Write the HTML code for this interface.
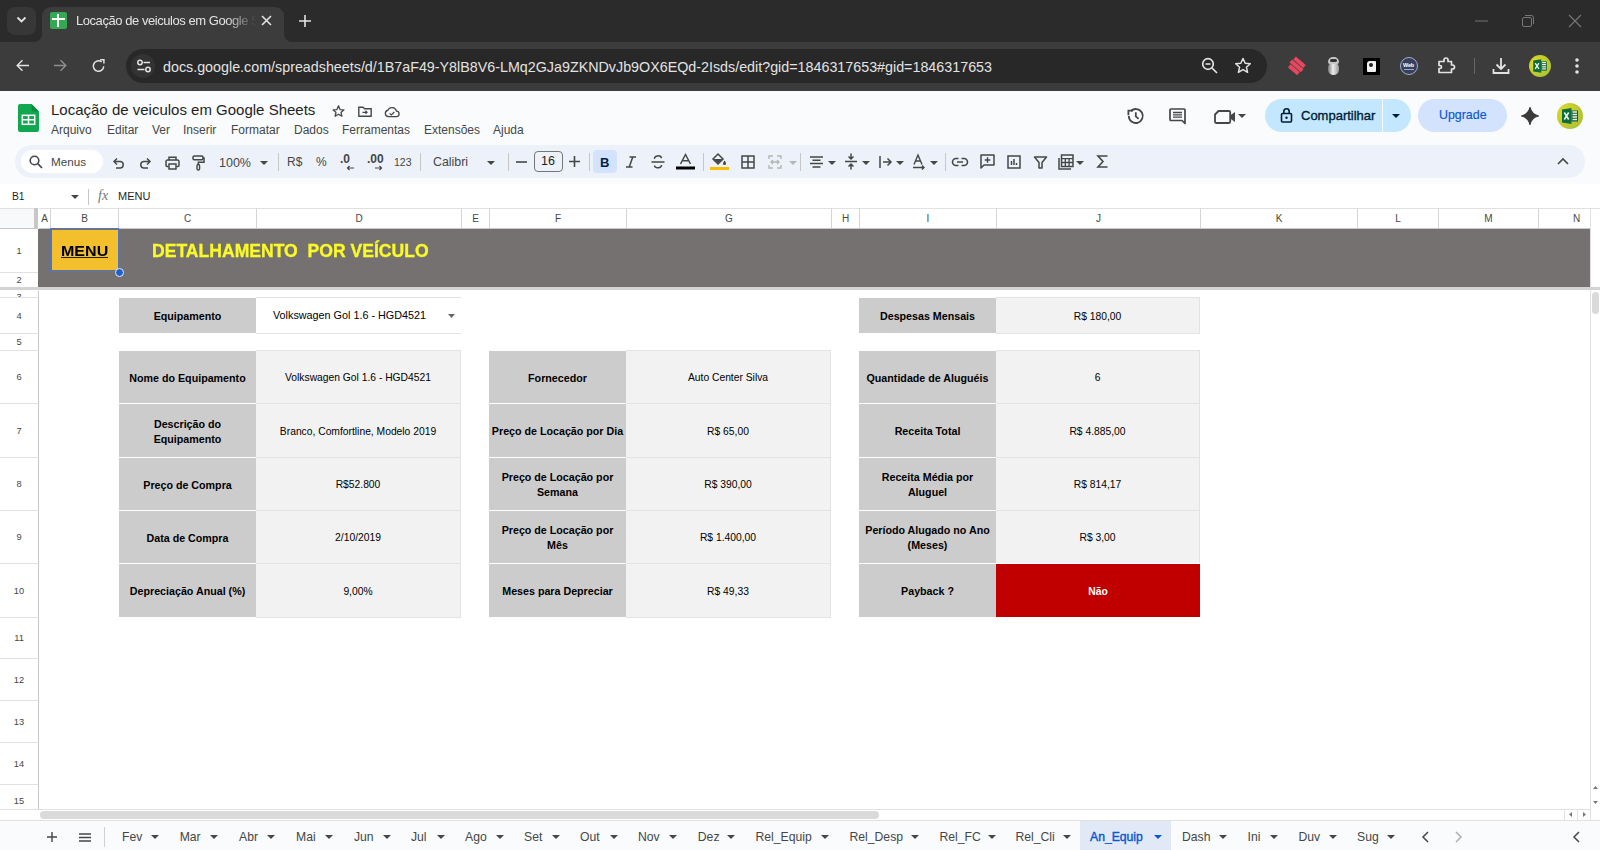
<!DOCTYPE html>
<html><head><meta charset="utf-8">
<style>
*{box-sizing:border-box;margin:0;padding:0}
html,body{width:1600px;height:850px;overflow:hidden;background:#fff;font-family:"Liberation Sans",sans-serif}
.a{position:absolute}
svg{position:absolute;overflow:visible}
/* chrome */
#tabstrip{left:0;top:0;width:1600px;height:42px;background:#2b2b2b}
#toolbar{left:0;top:42px;width:1600px;height:49px;background:#3c3c3c}
#omni{left:126px;top:49px;width:1141px;height:34px;border-radius:17px;background:#282828}
.ct{color:#e3e3e3;font-size:15px;white-space:nowrap}
/* sheets header */
#sh{left:0;top:91px;width:1600px;height:117px;background:#f9fbfd}
.menu{top:122.5px;font-size:12px;color:#444746;white-space:nowrap}
#tb{left:15px;top:145px;width:1570px;height:33px;border-radius:17px;background:#edf2fa}
.ti{color:#444746;font-size:12px;white-space:nowrap}
/* grid */
.colh{top:208px;height:21px;background:#fff;border-right:1px solid #d5d5d5;border-top:1px solid #e1e1e1;border-bottom:1px solid #c7c7c7;font-size:10px;color:#444746;text-align:center;line-height:20px}
.rowh{left:0;width:39px;background:#fff;border-bottom:1px solid #e1e1e1;border-right:1px solid #c7c7c7;font-size:9.3px;color:#444746;display:flex;align-items:center;justify-content:center}
.c{display:flex;align-items:center;justify-content:center;text-align:center;color:#000;font-size:10.3px;line-height:14.8px}
.lab{background:#cccccc;font-weight:bold;font-size:10.7px;padding-top:2px}
.val{background:#f2f2f2;padding-top:3px}
</style></head><body>

<!-- ============ CHROME TAB STRIP ============ -->
<div id="tabstrip" class="a"></div>
<div class="a" style="left:7px;top:7px;width:29px;height:28px;border-radius:8px;background:#373737"></div>
<svg style="left:16px;top:16px" width="11" height="8" viewBox="0 0 11 8"><path d="M1.5 1.5 L5.5 5.5 L9.5 1.5" stroke="#e3e3e3" stroke-width="1.8" fill="none"/></svg>
<div class="a" style="left:42px;top:7px;width:242px;height:36px;background:#3c3c3c;border-radius:9px 9px 0 0"></div>
<div class="a" style="left:34px;top:34px;width:8px;height:8px;background:#3c3c3c"></div><div class="a" style="left:26px;top:26px;width:16px;height:16px;border-radius:50%;background:#2b2b2b;clip-path:inset(8px 0 0 8px)"></div>
<div class="a" style="left:284px;top:34px;width:8px;height:8px;background:#3c3c3c"></div><div class="a" style="left:284px;top:26px;width:16px;height:16px;border-radius:50%;background:#2b2b2b;clip-path:inset(8px 8px 0 0)"></div>
<div class="a" style="left:50px;top:12px;width:17px;height:17px;background:#34a853;border-radius:2px"></div>
<div class="a" style="left:57px;top:14px;width:2px;height:13px;background:#fff"></div>
<div class="a" style="left:52px;top:18px;width:13px;height:2px;background:#fff"></div>
<div class="a ct" style="left:76px;top:12.5px;font-size:13px;letter-spacing:-0.45px;width:180px;overflow:hidden;-webkit-mask-image:linear-gradient(90deg,#000 150px,transparent 180px)">Locação de veiculos em Google Sheets</div>
<svg style="left:261px;top:15px" width="11" height="11" viewBox="0 0 11 11"><path d="M1 1L10 10M10 1L1 10" stroke="#e3e3e3" stroke-width="1.6"/></svg>
<svg style="left:298px;top:14px" width="14" height="14" viewBox="0 0 14 14"><path d="M7 1V13M1 7H13" stroke="#e3e3e3" stroke-width="1.6"/></svg>
<svg style="left:1475px;top:20px" width="14" height="2"><path d="M0 1H13" stroke="#777" stroke-width="1"/></svg>
<svg style="left:1521px;top:14px" width="14" height="14"><rect x="1.5" y="3.5" width="9" height="9" rx="1.5" stroke="#777" fill="none"/><path d="M4 1.5H10.5A2 2 0 0 1 12.5 3.5V10" stroke="#777" fill="none"/></svg>
<svg style="left:1568px;top:14px" width="14" height="14"><path d="M1 1L13 13M13 1L1 13" stroke="#777" stroke-width="1.1"/></svg>

<!-- ============ CHROME TOOLBAR ============ -->
<div id="toolbar" class="a"></div>
<svg style="left:16px;top:59px" width="14" height="14" viewBox="0 0 14 14"><path d="M13 6.5H1.5M6.5 1.2L1.2 6.5L6.5 11.8" stroke="#e3e3e3" stroke-width="1.4" fill="none"/></svg>
<svg style="left:53px;top:59px" width="14" height="14" viewBox="0 0 14 14"><path d="M1 6.5H12.5M7.5 1.2L12.8 6.5L7.5 11.8" stroke="#8e8e8e" stroke-width="1.4" fill="none"/></svg>
<svg style="left:91px;top:58px" width="15" height="15" viewBox="0 0 15 15"><path d="M12.7 8.2A5.2 5.2 0 1 1 10.6 3.9" stroke="#e3e3e3" stroke-width="1.5" fill="none"/><path d="M9.2 1.8H12.9V5.5" stroke="#e3e3e3" stroke-width="1.5" fill="none"/></svg>
<div id="omni" class="a"></div>
<div class="a" style="left:131px;top:54px;width:24px;height:24px;border-radius:50%;background:#333"></div>
<svg style="left:136px;top:59px" width="16" height="14" viewBox="0 0 16 14"><circle cx="4" cy="3.5" r="2.2" stroke="#e3e3e3" stroke-width="1.5" fill="none"/><path d="M7.5 3.5H14" stroke="#e3e3e3" stroke-width="1.5"/><circle cx="12" cy="10.5" r="2.2" stroke="#e3e3e3" stroke-width="1.5" fill="none"/><path d="M1.5 10.5H8.5" stroke="#e3e3e3" stroke-width="1.5"/></svg>
<div class="a ct" style="left:163px;top:58.5px;font-size:14.3px">docs.google.com/spreadsheets/d/1B7aF49-Y8lB8V6-LMq2GJa9ZKNDvJb9OX6EQd-2Isds/edit?gid=1846317653#gid=1846317653</div>
<svg style="left:1201px;top:57px" width="18" height="18" viewBox="0 0 18 18"><circle cx="7" cy="7" r="5.3" stroke="#e3e3e3" stroke-width="1.7" fill="none"/><path d="M11 11L16 16M4.5 7H9.5" stroke="#e3e3e3" stroke-width="1.7"/></svg>
<svg style="left:1234px;top:57px" width="18" height="18" viewBox="0 0 18 18"><path d="M9 1.5L11.2 6.3L16.3 6.8L12.4 10.2L13.6 15.3L9 12.6L4.4 15.3L5.6 10.2L1.7 6.8L6.8 6.3Z" stroke="#e3e3e3" stroke-width="1.5" fill="none" stroke-linejoin="round"/></svg>


<!-- extension icons -->
<svg style="left:1286px;top:55px" width="22" height="22" viewBox="0 0 22 22"><g transform="rotate(40 11 11)" fill="#e4475e"><rect x="4" y="4.5" width="13" height="4"/><rect x="3" y="9.2" width="15" height="4"/><rect x="5" y="13.9" width="12" height="4"/></g></svg>
<div class="a" style="left:1328px;top:63px;width:11px;height:12px;border-radius:5px 5px 6px 6px;background:linear-gradient(90deg,#777,#eee 45%,#999)"></div>
<div class="a" style="left:1328px;top:57px;width:11px;height:7px;border-radius:5px 5px 2px 2px;background:#c8c8c8"></div>
<div class="a" style="left:1330px;top:59px;width:7px;height:3px;border-radius:2px;background:#333"></div>
<div class="a" style="left:1363px;top:58px;width:17px;height:17px;background:#000"></div>
<div class="a" style="left:1367px;top:61px;width:9px;height:11px;background:#f2f2f2;border-radius:3px 1px 1px 1px"></div>
<div class="a" style="left:1369px;top:63px;width:4px;height:4px;background:#222;border-radius:50%"></div>
<div class="a" style="left:1400px;top:57px;width:18px;height:18px;border-radius:50%;background:#33405e;border:1.5px solid #a6adc8"></div>
<div class="a" style="left:1403px;top:62px;font-size:5.5px;color:#fff;font-weight:bold;letter-spacing:-0.2px">Web</div>
<div class="a" style="left:1404px;top:69px;width:10px;height:1px;background:#aab"></div>
<svg style="left:1437px;top:57px" width="18" height="18" viewBox="0 0 18 18"><path d="M2 4.5H7V3A2 2 0 0 1 11 3V4.5H14.5V8H15.5A2 2 0 0 1 15.5 12H14.5V15.5H2V11.5H3A1.5 1.5 0 0 0 3 8.5H2Z" stroke="#e3e3e3" stroke-width="1.7" fill="none" stroke-linejoin="round"/></svg>
<div class="a" style="left:1474px;top:58px;width:1px;height:16px;background:#666"></div>
<svg style="left:1492px;top:57px" width="18" height="18" viewBox="0 0 18 18"><path d="M9 1V12M4.5 7.5L9 12L13.5 7.5M1.5 12V16H16.5V12" stroke="#e3e3e3" stroke-width="1.8" fill="none"/></svg>
<svg style="left:1529px;top:55px" width="22" height="22" viewBox="0 0 26 26"><defs><radialGradient id="g1540" cx="0.3" cy="0.35" r="0.8"><stop offset="0" stop-color="#e2dc28"/><stop offset="1" stop-color="#a9be35"/></radialGradient></defs><circle cx="13" cy="13" r="13" fill="url(#g1540)"/><path d="M5 6.5L14.5 5V21L5 19.5Z" fill="#116b3c"/><path d="M14.5 7.5H21V18.5H14.5Z" fill="#155c34"/><path d="M15.5 9H20M15.5 11.5H20M15.5 14H20M15.5 16.5H20" stroke="#e8f5ec" stroke-width="1.5"/><path d="M7.3 9.5L11.7 16.5M11.7 9.5L7.3 16.5" stroke="#e8f5ec" stroke-width="1.6"/></svg>
<svg style="left:1575px;top:57px" width="4" height="18"><circle cx="2" cy="3" r="1.8" fill="#e3e3e3"/><circle cx="2" cy="9" r="1.8" fill="#e3e3e3"/><circle cx="2" cy="15" r="1.8" fill="#e3e3e3"/></svg>

<!-- ============ SHEETS HEADER ============ -->
<div id="sh" class="a"></div>
<svg style="left:18px;top:104px" width="21" height="28" viewBox="0 0 21 28"><path d="M2 0H13.5L21 7.5V26A2 2 0 0 1 19 28H2A2 2 0 0 1 0 26V2A2 2 0 0 1 2 0Z" fill="#10a84e"/><path d="M13.5 0L21 7.5H15.5A2 2 0 0 1 13.5 5.5Z" fill="#0b8a3e"/><rect x="4.3" y="11.3" width="12.4" height="9" fill="none" stroke="#fff" stroke-width="1.5"/><path d="M4.3 15.8H16.7M10.5 11.3V20.3" stroke="#fff" stroke-width="1.5"/></svg>
<div class="a" style="left:51px;top:101px;font-size:15px;color:#1f1f1f;white-space:nowrap">Locação de veiculos em Google Sheets</div>
<svg style="left:331.5px;top:104.5px" width="13" height="13" viewBox="0 0 15 15"><path d="M7.5 1L9.3 5.3L13.8 5.6L10.4 8.6L11.4 13L7.5 10.7L3.6 13L4.6 8.6L1.2 5.6L5.7 5.3Z" stroke="#444746" stroke-width="1.5" fill="none" stroke-linejoin="round"/></svg>
<svg style="left:358px;top:106px" width="14" height="11" viewBox="0 0 14 11"><path d="M0.8 1.3V10.2H13.2V2.8H6.5L5 1.3Z" stroke="#444746" stroke-width="1.4" fill="none" stroke-linejoin="round"/><path d="M4.5 6.3H9M7.5 4.8L9 6.3L7.5 7.8" stroke="#444746" stroke-width="1.3" fill="none"/></svg>
<svg style="left:383.5px;top:105.5px" width="16" height="12" viewBox="0 0 17 13"><path d="M4.5 11.5A3.5 3.5 0 0 1 4 4.6A5 5 0 0 1 13.3 5.5A3 3 0 0 1 13 11.5Z" stroke="#444746" stroke-width="1.4" fill="none"/><path d="M6 8L7.8 9.7L11 6.5" stroke="#444746" stroke-width="1.3" fill="none"/></svg>
<div class="a menu" style="left:51px">Arquivo</div>
<div class="a menu" style="left:107px">Editar</div>
<div class="a menu" style="left:152px">Ver</div>
<div class="a menu" style="left:183px">Inserir</div>
<div class="a menu" style="left:231px">Formatar</div>
<div class="a menu" style="left:294px">Dados</div>
<div class="a menu" style="left:342px">Ferramentas</div>
<div class="a menu" style="left:424px">Extensões</div>
<div class="a menu" style="left:493px">Ajuda</div>

<!-- right header -->
<svg style="left:1126px;top:106.5px" width="19" height="18" viewBox="0 0 19 18"><path d="M2.8 9A7 7 0 1 0 4.9 4" stroke="#444746" stroke-width="1.8" fill="none"/><path d="M2.4 8.2V3.6H7" stroke="#444746" stroke-width="1.8" fill="none"/><path d="M9.8 5.3V9.3L12.6 11.8" stroke="#444746" stroke-width="1.8" fill="none"/></svg>
<svg style="left:1168.5px;top:108px" width="17" height="17" viewBox="0 0 17 17"><path d="M1 2A1 1 0 0 1 2 1H15A1 1 0 0 1 16 2V15.5L13 12.5H2A1 1 0 0 1 1 11.5Z" stroke="#444746" stroke-width="1.7" fill="none" stroke-linejoin="round"/><path d="M4 4.5H13M4 6.8H13M4 9.1H13" stroke="#444746" stroke-width="1.3"/></svg>
<svg style="left:1214px;top:109.5px" width="23" height="14" viewBox="0 0 23 14"><path d="M4.5 1H15A1.2 1.2 0 0 1 16.2 2.2V11.8A1.2 1.2 0 0 1 15 13H2.2A1.2 1.2 0 0 1 1 11.8V4.5Z" stroke="#444746" stroke-width="1.8" fill="none" stroke-linejoin="round"/><path d="M16.2 5.5L21 2V12L16.2 8.5Z" fill="#444746"/></svg>
<svg style="left:1238px;top:114px" width="8" height="4"><path d="M0 0H8L4 4Z" fill="#444746"/></svg>
<div class="a" style="left:1265px;top:99px;width:146px;height:33px;border-radius:17px;background:#c2e7ff"></div>
<div class="a" style="left:1382px;top:99px;width:1px;height:33px;background:#f9fbfd"></div>
<svg style="left:1280px;top:107px" width="13" height="16" viewBox="0 0 13 16"><rect x="1.5" y="6.5" width="10" height="8.5" rx="1" stroke="#001d35" stroke-width="1.6" fill="none"/><path d="M3.8 6.5V4.5A2.7 2.7 0 0 1 9.2 4.5V6.5" stroke="#001d35" stroke-width="1.6" fill="none"/><circle cx="6.5" cy="10.8" r="1.2" fill="#001d35"/></svg>
<div class="a" style="left:1301px;top:108px;font-size:13px;color:#001d35;-webkit-text-stroke:0.35px #001d35;white-space:nowrap">Compartilhar</div>
<svg style="left:1392px;top:114px" width="8" height="4"><path d="M0 0H8L4 4Z" fill="#001d35"/></svg>
<div class="a" style="left:1418px;top:99px;width:89px;height:33px;border-radius:17px;background:#d3e3fd"></div>
<div class="a" style="left:1439px;top:108px;font-size:12.4px;color:#0b57d0;-webkit-text-stroke:0.15px #0b57d0;white-space:nowrap">Upgrade</div>
<svg style="left:1520px;top:106px" width="20" height="20" viewBox="0 0 20 20"><path d="M10 1.5C11 6 14 9 18.5 10C14 11 11 14 10 18.5C9 14 6 11 1.5 10C6 9 9 6 10 1.5Z" fill="#3a3a3a" stroke="#3a3a3a" stroke-width="1.2" stroke-linejoin="round"/></svg>
<svg style="left:1557px;top:103px" width="26" height="26" viewBox="0 0 26 26"><defs><radialGradient id="g1570" cx="0.3" cy="0.35" r="0.8"><stop offset="0" stop-color="#e2dc28"/><stop offset="1" stop-color="#a9be35"/></radialGradient></defs><circle cx="13" cy="13" r="13" fill="url(#g1570)"/><path d="M5 6.5L14.5 5V21L5 19.5Z" fill="#116b3c"/><path d="M14.5 7.5H21V18.5H14.5Z" fill="#155c34"/><path d="M15.5 9H20M15.5 11.5H20M15.5 14H20M15.5 16.5H20" stroke="#e8f5ec" stroke-width="1.5"/><path d="M7.3 9.5L11.7 16.5M11.7 9.5L7.3 16.5" stroke="#e8f5ec" stroke-width="1.6"/></svg>


<!-- ============ TOOLBAR ============ -->
<div id="tb" class="a"></div>
<div class="a" style="left:21px;top:150px;width:82px;height:23px;border-radius:12px;background:#fff"></div>
<svg style="left:29px;top:155px" width="14" height="14" viewBox="0 0 14 14"><circle cx="5.5" cy="5.5" r="4.3" stroke="#444746" stroke-width="1.6" fill="none"/><path d="M8.7 8.7L13 13" stroke="#444746" stroke-width="1.7"/></svg>
<div class="a ti" style="left:51px;top:155px;font-size:11.7px">Menus</div>
<svg style="left:112px;top:157px" width="13" height="12" viewBox="0 0 13 12"><path d="M3 4.5H8.5A3.3 3.3 0 0 1 8.5 11H4" stroke="#444746" stroke-width="1.5" fill="none"/><path d="M5 1.5L2 4.5L5 7.5" stroke="#444746" stroke-width="1.5" fill="none"/></svg>
<svg style="left:139px;top:157px" width="13" height="12" viewBox="0 0 13 12"><path d="M10 4.5H4.5A3.3 3.3 0 0 0 4.5 11H9" stroke="#444746" stroke-width="1.5" fill="none"/><path d="M8 1.5L11 4.5L8 7.5" stroke="#444746" stroke-width="1.5" fill="none"/></svg>
<svg style="left:165px;top:156px" width="15" height="14" viewBox="0 0 15 14"><path d="M4 4.2V1.2H11V4.2" stroke="#444746" stroke-width="1.5" fill="none"/><path d="M3.5 10.5H2.2A1.2 1.2 0 0 1 1 9.3V5.5A1.5 1.5 0 0 1 2.5 4H12.5A1.5 1.5 0 0 1 14 5.5V9.3A1.2 1.2 0 0 1 12.8 10.5H11.5" stroke="#444746" stroke-width="1.5" fill="none"/><rect x="4" y="8" width="7" height="5" stroke="#444746" stroke-width="1.5" fill="none"/></svg>
<svg style="left:192px;top:155px" width="13" height="16" viewBox="0 0 13 16"><rect x="1" y="1" width="10" height="3.8" rx="1.2" stroke="#444746" stroke-width="1.5" fill="none"/><path d="M11 3H12V7.3H6.3V9.5" stroke="#444746" stroke-width="1.5" fill="none"/><rect x="5" y="9.5" width="2.6" height="5.5" rx="1.3" stroke="#444746" stroke-width="1.4" fill="none"/></svg>
<div class="a ti" style="left:219px;top:156px;font-size:12.5px">100%</div>
<svg style="left:260px;top:161px" width="8" height="4"><path d="M0 0H8L4 4Z" fill="#444746"/></svg>
<div class="a" style="left:278px;top:153px;width:1px;height:18px;background:#c7c7c7"></div>
<div class="a ti" style="left:287px;top:155px;font-size:12px">R$</div>
<div class="a ti" style="left:316px;top:155px;font-size:12px">%</div>
<div class="a ti" style="left:340px;top:152px;font-size:12px;font-weight:bold">.0</div>
<svg style="left:346px;top:165px" width="9" height="6"><path d="M8 3H1.5M3.5 1L1.5 3L3.5 5" stroke="#444746" stroke-width="1.2" fill="none"/></svg>
<div class="a ti" style="left:367px;top:152px;font-size:12px;font-weight:bold">.00</div>
<svg style="left:374px;top:165px" width="9" height="6"><path d="M1 3H7.5M5.5 1L7.5 3L5.5 5" stroke="#444746" stroke-width="1.2" fill="none"/></svg>
<div class="a ti" style="left:394px;top:156px;font-size:10.5px">123</div>
<div class="a" style="left:420px;top:153px;width:1px;height:18px;background:#c7c7c7"></div>
<div class="a ti" style="left:433px;top:155px;font-size:12.4px">Calibri</div>
<svg style="left:487px;top:161px" width="8" height="4"><path d="M0 0H8L4 4Z" fill="#444746"/></svg>
<div class="a" style="left:508px;top:153px;width:1px;height:18px;background:#c7c7c7"></div>
<svg style="left:516px;top:161px" width="11" height="2"><path d="M0 1H11" stroke="#444746" stroke-width="1.6"/></svg>
<div class="a" style="left:534px;top:151px;width:29px;height:21px;border:1px solid #747775;border-radius:4px"></div>
<div class="a ti" style="left:541px;top:154px;font-size:12.5px;color:#1f1f1f">16</div>
<svg style="left:569px;top:156px" width="11" height="11"><path d="M5.5 0V11M0 5.5H11" stroke="#444746" stroke-width="1.6"/></svg>
<div class="a" style="left:589px;top:153px;width:1px;height:18px;background:#c7c7c7"></div>
<div class="a" style="left:593px;top:150px;width:24px;height:23px;border-radius:4px;background:#d3e3fd"></div>
<div class="a" style="left:600px;top:155px;font-size:13px;font-weight:bold;color:#041e49">B</div>
<svg style="left:625px;top:156px" width="12" height="12" viewBox="0 0 12 12"><path d="M4.5 1H11M1 11H7.5M7.8 1L4.2 11" stroke="#444746" stroke-width="1.5" fill="none"/></svg>
<svg style="left:651px;top:155px" width="14" height="14" viewBox="0 0 14 14"><path d="M10.5 3.2A3.5 2.6 0 0 0 3.5 3.8M3.5 10.5A3.5 2.6 0 0 0 10.5 10" stroke="#444746" stroke-width="1.5" fill="none"/><path d="M0.5 7H13.5" stroke="#444746" stroke-width="1.5"/></svg>
<svg style="left:676px;top:153px" width="19" height="17" viewBox="0 0 19 17"><path d="M4.5 11L9.5 1.5L14.5 11M6.3 7.8H12.7" stroke="#444746" stroke-width="1.5" fill="none"/><rect x="0" y="13.5" width="19" height="3" fill="#000"/></svg>
<div class="a" style="left:703px;top:153px;width:1px;height:18px;background:#c7c7c7"></div>
<svg style="left:710px;top:152px" width="19" height="19" viewBox="0 0 19 19"><path d="M3 7L8 2L13 7L8 12Z" stroke="#444746" stroke-width="1.5" fill="none"/><path d="M3.5 7H12.5L8 11.5Z" fill="#444746"/><path d="M14.5 8.5C15.5 10 16 10.8 16 11.5A1.5 1.5 0 0 1 13 11.5C13 10.8 13.5 10 14.5 8.5Z" fill="#444746"/><rect x="0" y="15" width="19" height="3" fill="#fbbc04"/></svg>
<svg style="left:741px;top:155px" width="14" height="14" viewBox="0 0 14 14"><rect x="1" y="1" width="12" height="12" stroke="#444746" stroke-width="1.5" fill="none"/><path d="M7 1V13M1 7H13" stroke="#444746" stroke-width="1.5"/></svg>
<svg style="left:768px;top:155px" width="14" height="14" viewBox="0 0 14 14"><path d="M1 4V1H5M9 1H13V4M1 10V13H5M9 13H13V10M3 7H11M5 5L3 7L5 9M9 5L11 7L9 9" stroke="#b4b6b8" stroke-width="1.4" fill="none"/></svg>
<svg style="left:789px;top:161px" width="8" height="4"><path d="M0 0H8L4 4Z" fill="#b4b6b8"/></svg>
<div class="a" style="left:800px;top:153px;width:1px;height:18px;background:#c7c7c7"></div>
<svg style="left:810px;top:156px" width="13" height="12" viewBox="0 0 13 12"><path d="M0 1H13M2.5 4.3H10.5M0 7.6H13M2.5 10.9H10.5" stroke="#444746" stroke-width="1.5"/></svg>
<svg style="left:828px;top:161px" width="8" height="4"><path d="M0 0H8L4 4Z" fill="#444746"/></svg>
<svg style="left:845px;top:153px" width="12" height="17" viewBox="0 0 12 17"><path d="M0 8.5H12" stroke="#444746" stroke-width="1.5"/><path d="M6 0.5V6M3.5 3.5L6 6L8.5 3.5M6 16.5V11M3.5 13.5L6 11L8.5 13.5" stroke="#444746" stroke-width="1.5" fill="none"/></svg>
<svg style="left:862px;top:161px" width="8" height="4"><path d="M0 0H8L4 4Z" fill="#444746"/></svg>
<svg style="left:879px;top:155px" width="14" height="14" viewBox="0 0 14 14"><path d="M1 1V13M4 7H12M8.5 3.5L12 7L8.5 10.5" stroke="#444746" stroke-width="1.5" fill="none"/></svg>
<svg style="left:896px;top:161px" width="8" height="4"><path d="M0 0H8L4 4Z" fill="#444746"/></svg>
<svg style="left:912px;top:154px" width="14" height="16" viewBox="0 0 14 16"><path d="M2 10.5L6 1L10 10.5M3.5 7H8.5M1 13.5H12M10 11.5L12 13.5L10 15.5" stroke="#444746" stroke-width="1.4" fill="none"/></svg>
<svg style="left:930px;top:161px" width="8" height="4"><path d="M0 0H8L4 4Z" fill="#444746"/></svg>
<div class="a" style="left:945px;top:153px;width:1px;height:18px;background:#c7c7c7"></div>
<svg style="left:952px;top:157px" width="16" height="10" viewBox="0 0 16 10"><path d="M6.5 1.5H4A3.5 3.5 0 0 0 4 8.5H6.5M9.5 1.5H12A3.5 3.5 0 0 1 12 8.5H9.5M5 5H11" stroke="#444746" stroke-width="1.6" fill="none"/></svg>
<svg style="left:980px;top:154px" width="15" height="15" viewBox="0 0 15 15"><path d="M1 1H14V11H4L1 14Z" stroke="#444746" stroke-width="1.5" fill="none" stroke-linejoin="round"/><path d="M7.5 3.2V8.8M4.7 6H10.3" stroke="#444746" stroke-width="1.5"/></svg>
<svg style="left:1007px;top:155px" width="14" height="14" viewBox="0 0 14 14"><rect x="1" y="1" width="12" height="12" stroke="#444746" stroke-width="1.5" fill="none"/><path d="M4.5 10V6M7 10V4M9.5 10V8" stroke="#444746" stroke-width="1.5"/></svg>
<svg style="left:1034px;top:156px" width="13" height="13" viewBox="0 0 13 13"><path d="M0.5 1H12.5L8 6.5V12H5V6.5Z" stroke="#444746" stroke-width="1.5" fill="none" stroke-linejoin="round"/></svg>
<svg style="left:1058px;top:154px" width="16" height="16" viewBox="0 0 16 16"><path d="M1 4V15H13" stroke="#444746" stroke-width="1.5" fill="none"/><rect x="3.5" y="1" width="11.5" height="11.5" stroke="#444746" stroke-width="1.5" fill="none"/><path d="M3.5 4.7H15M3.5 8.5H15M7.3 4.7V12.5M11.1 4.7V12.5" stroke="#444746" stroke-width="1.3"/></svg>
<svg style="left:1076px;top:161px" width="8" height="4"><path d="M0 0H8L4 4Z" fill="#444746"/></svg>
<svg style="left:1097px;top:155px" width="11" height="13" viewBox="0 0 11 13"><path d="M10.5 1H1L6 6.5L1 12H10.5" stroke="#444746" stroke-width="1.6" fill="none"/></svg>
<svg style="left:1557px;top:158px" width="12" height="7" viewBox="0 0 12 7"><path d="M1 6L6 1L11 6" stroke="#444746" stroke-width="1.6" fill="none"/></svg>

<!-- ============ FORMULA BAR ============ -->
<div class="a" style="left:0;top:184px;width:1600px;height:24px;background:#fff"></div>
<div class="a" style="left:12px;top:190.5px;font-size:10.3px;color:#1f1f1f">B1</div>
<svg style="left:71px;top:195px" width="8" height="4"><path d="M0 0H8L4 4Z" fill="#444746"/></svg>
<div class="a" style="left:88px;top:189px;width:1px;height:16px;background:#c7c7c7"></div>
<div class="a" style="left:98px;top:188px;font-size:14px;color:#777;font-style:italic;font-family:'Liberation Serif',serif">fx</div>
<div class="a" style="left:118px;top:190px;font-size:11px;color:#1f1f1f">MENU</div>


<!-- ============ GRID ============ -->
<div class="a" style="left:0;top:208px;width:1590px;height:602px;background:#fff"></div>
<div class="a" style="left:0;top:208px;width:38px;height:21px;background:#f8f9fa;border-top:1px solid #e1e1e1;border-bottom:1px solid #c7c7c7;border-right:1px solid #c7c7c7"></div>
<div class="a" style="left:34px;top:208px;width:4px;height:21px;background:#c7c7c7"></div>
<div class="a colh" style="left:39px;width:12px">A</div>
<div class="a colh" style="left:51px;width:68px">B</div>
<div class="a colh" style="left:119px;width:138px">C</div>
<div class="a colh" style="left:257px;width:205px">D</div>
<div class="a colh" style="left:462px;width:28px">E</div>
<div class="a colh" style="left:490px;width:137px">F</div>
<div class="a colh" style="left:627px;width:205px">G</div>
<div class="a colh" style="left:832px;width:28px">H</div>
<div class="a colh" style="left:860px;width:137px">I</div>
<div class="a colh" style="left:997px;width:204px">J</div>
<div class="a colh" style="left:1201px;width:157px">K</div>
<div class="a colh" style="left:1358px;width:81px">L</div>
<div class="a colh" style="left:1439px;width:100px">M</div>
<div class="a colh" style="left:1539px;width:76px">N</div>
<div class="a rowh" style="top:230px;height:43px">1</div>
<div class="a rowh" style="top:273px;height:15px">2</div>
<div class="a rowh" style="top:291px;height:7px;overflow:hidden;align-items:flex-start"><span style="margin-top:1px">3</span></div>
<div class="a rowh" style="top:298px;height:36px">4</div>
<div class="a rowh" style="top:334px;height:17px">5</div>
<div class="a rowh" style="top:351px;height:53px">6</div>
<div class="a rowh" style="top:404px;height:54px">7</div>
<div class="a rowh" style="top:458px;height:53px">8</div>
<div class="a rowh" style="top:511px;height:53px">9</div>
<div class="a rowh" style="top:564px;height:54px">10</div>
<div class="a rowh" style="top:618px;height:41px">11</div>
<div class="a rowh" style="top:659px;height:42px">12</div>
<div class="a rowh" style="top:701px;height:42px">13</div>
<div class="a rowh" style="top:743px;height:42px">14</div>
<div class="a rowh" style="top:785px;height:25px;padding-top:7px">15</div>
<div class="a" style="left:0;top:287px;width:1590px;height:3px;background:#d3d3d3"></div>
<div class="a" style="left:38px;top:229px;width:1552px;height:58px;background:#757170"></div>
<div class="a" style="left:52px;top:230px;width:66px;height:40px;background:#f3bf2c"></div><div class="a" style="left:60.5px;top:243px;font-weight:bold;font-size:14.6px;color:#000;white-space:nowrap;transform:scaleX(1.1);transform-origin:0 0">MENU</div><div class="a" style="left:61px;top:257px;width:47px;height:1.3px;background:#2a1e05"></div>
<div class="a" style="left:50px;top:228px;width:69px;height:44px;border:1.5px solid #5577b8"></div>
<div class="a" style="left:114.6px;top:268px;width:9px;height:9px;border-radius:50%;background:#1b5fd1;border:1.3px solid #e8eefc"></div>
<div class="a" style="left:152px;top:240px;font-size:18.9px;font-weight:bold;color:#fafa28;-webkit-text-stroke:0.35px #fafa28;white-space:nowrap;transform:scaleX(0.93);transform-origin:0 0">DETALHAMENTO&nbsp; POR VEÍCULO</div>

<!-- ============ CELLS ============ -->
<div class="a c lab" style="left:119px;top:298px;width:137px;height:35px">Equipamento</div>
<div class="a" style="left:256px;top:297px;width:205px;height:37px;background:#fff;border-top:1px solid #e3e3e3;border-bottom:1px solid #e3e3e3"></div>
<div class="a c" style="left:273px;top:297px;height:37px;justify-content:flex-start;font-size:10.8px">Volkswagen Gol 1.6 - HGD4521</div>
<svg style="left:448px;top:314px" width="7" height="4"><path d="M0 0H7L3.5 4Z" fill="#666"/></svg>
<div class="a c lab" style="left:859px;top:298px;width:137px;height:35px">Despesas Mensais</div>
<div class="a c val" style="left:996px;top:297px;width:204px;height:37px;border:1px solid #e3e3e3;border-left:none">R$ 180,00</div>
<div class="a c lab" style="left:119px;top:351px;width:137px;height:52px">Nome do Equipamento</div>
<div class="a c val" style="left:256px;top:350px;width:205px;height:53px;border-top:1px solid #e3e3e3;border-right:1px solid #e3e3e3;">Volkswagen Gol 1.6 - HGD4521</div>
<div class="a c lab" style="left:119px;top:404px;width:137px;height:53px">Descrição do<br>Equipamento</div>
<div class="a c val" style="left:256px;top:403px;width:205px;height:54px;border-top:1px solid #e3e3e3;border-right:1px solid #e3e3e3;">Branco, Comfortline, Modelo 2019</div>
<div class="a c lab" style="left:119px;top:458px;width:137px;height:52px">Preço de Compra</div>
<div class="a c val" style="left:256px;top:457px;width:205px;height:53px;border-top:1px solid #e3e3e3;border-right:1px solid #e3e3e3;">R$52.800</div>
<div class="a c lab" style="left:119px;top:511px;width:137px;height:52px">Data de Compra</div>
<div class="a c val" style="left:256px;top:510px;width:205px;height:53px;border-top:1px solid #e3e3e3;border-right:1px solid #e3e3e3;">2/10/2019</div>
<div class="a c lab" style="left:119px;top:564px;width:137px;height:53px">Depreciação Anual (%)</div>
<div class="a c val" style="left:256px;top:563px;width:205px;height:55px;border-top:1px solid #e3e3e3;border-right:1px solid #e3e3e3;border-bottom:1px solid #e3e3e3;">9,00%</div>
<div class="a c lab" style="left:489px;top:351px;width:137px;height:52px">Fornecedor</div>
<div class="a c val" style="left:626px;top:350px;width:205px;height:53px;border-top:1px solid #e3e3e3;border-right:1px solid #e3e3e3;">Auto Center Silva</div>
<div class="a c lab" style="left:489px;top:404px;width:137px;height:53px">Preço de Locação por Dia</div>
<div class="a c val" style="left:626px;top:403px;width:205px;height:54px;border-top:1px solid #e3e3e3;border-right:1px solid #e3e3e3;">R$ 65,00</div>
<div class="a c lab" style="left:489px;top:458px;width:137px;height:52px">Preço de Locação por<br>Semana</div>
<div class="a c val" style="left:626px;top:457px;width:205px;height:53px;border-top:1px solid #e3e3e3;border-right:1px solid #e3e3e3;">R$ 390,00</div>
<div class="a c lab" style="left:489px;top:511px;width:137px;height:52px">Preço de Locação por<br>Mês</div>
<div class="a c val" style="left:626px;top:510px;width:205px;height:53px;border-top:1px solid #e3e3e3;border-right:1px solid #e3e3e3;">R$ 1.400,00</div>
<div class="a c lab" style="left:489px;top:564px;width:137px;height:53px">Meses para Depreciar</div>
<div class="a c val" style="left:626px;top:563px;width:205px;height:55px;border-top:1px solid #e3e3e3;border-right:1px solid #e3e3e3;border-bottom:1px solid #e3e3e3;">R$ 49,33</div>
<div class="a c lab" style="left:859px;top:351px;width:137px;height:52px">Quantidade de Aluguéis</div>
<div class="a c val" style="left:996px;top:350px;width:204px;height:53px;border-top:1px solid #e3e3e3;border-right:1px solid #e3e3e3;">6</div>
<div class="a c lab" style="left:859px;top:404px;width:137px;height:53px">Receita Total</div>
<div class="a c val" style="left:996px;top:403px;width:204px;height:54px;border-top:1px solid #e3e3e3;border-right:1px solid #e3e3e3;">R$ 4.885,00</div>
<div class="a c lab" style="left:859px;top:458px;width:137px;height:52px">Receita Média por<br>Aluguel</div>
<div class="a c val" style="left:996px;top:457px;width:204px;height:53px;border-top:1px solid #e3e3e3;border-right:1px solid #e3e3e3;">R$ 814,17</div>
<div class="a c lab" style="left:859px;top:511px;width:137px;height:52px">Período Alugado no Ano<br>(Meses)</div>
<div class="a c val" style="left:996px;top:510px;width:204px;height:53px;border-top:1px solid #e3e3e3;border-right:1px solid #e3e3e3;">R$ 3,00</div>
<div class="a c lab" style="left:859px;top:564px;width:137px;height:53px">Payback ?</div>
<div class="a" style="left:996px;top:563px;width:204px;height:1px;background:#fff"></div><div class="a c val" style="left:996px;top:564px;width:204px;height:53px;background:#c00000;color:#fff;font-weight:bold;">Não</div>

<!-- ============ BOTTOM ============ -->
<div class="a" style="left:0;top:809px;width:1590px;height:1px;background:#e1e1e1"></div>
<div class="a" style="left:38px;top:810px;width:1552px;height:10px;background:#fff"></div>
<div class="a" style="left:40px;top:811px;width:839px;height:8px;border-radius:4px;background:#dadada"></div>
<div class="a" style="left:1590px;top:208px;width:10px;height:612px;background:#fff;border-left:1px solid #e1e1e1;border-top:1px solid #e1e1e1"></div><div class="a" style="left:1590px;top:287px;width:10px;height:3px;background:#d3d3d3"></div>
<div class="a" style="left:1592px;top:292px;width:7px;height:22px;border-radius:4px;background:#dadada"></div>
<svg style="left:1593px;top:786px" width="5" height="3"><path d="M0 3H5L2.5 0Z" fill="#777"/></svg>
<svg style="left:1593px;top:801px" width="5" height="3"><path d="M0 0H5L2.5 3Z" fill="#777"/></svg>
<div class="a" style="left:1564px;top:810px;width:26px;height:10px;border-left:1px solid #e1e1e1"></div>
<div class="a" style="left:1577px;top:810px;width:1px;height:10px;background:#e1e1e1"></div>
<svg style="left:1569px;top:812px" width="3" height="5"><path d="M3 0V5L0 2.5Z" fill="#777"/></svg>
<svg style="left:1583px;top:812px" width="3" height="5"><path d="M0 0V5L3 2.5Z" fill="#777"/></svg>
<div class="a" style="left:0;top:820px;width:1600px;height:30px;background:#f9fbfd;border-top:1px solid #e1e1e1"></div>
<svg style="left:47px;top:832px" width="10" height="10"><path d="M5 0V10M0 5H10" stroke="#444746" stroke-width="1.4"/></svg>
<svg style="left:79px;top:833px" width="12" height="9"><path d="M0 1H12M0 4.5H12M0 8H12" stroke="#444746" stroke-width="1.3"/></svg>
<div class="a" style="left:104px;top:827px;width:1px;height:20px;background:#d0d0d0"></div>
<div class="a" style="left:1080px;top:821px;width:91px;height:29px;background:#e1e9f7"></div>
<div class="a" style="left:122px;top:830px;font-size:12.2px;color:#444746;white-space:nowrap">Fev</div>
<svg style="left:150.7px;top:835px" width="8" height="4"><path d="M0 0H8L4 4Z" fill="#444746"/></svg>
<div class="a" style="left:179.7px;top:830px;font-size:12.2px;color:#444746;white-space:nowrap">Mar</div>
<svg style="left:210px;top:835px" width="8" height="4"><path d="M0 0H8L4 4Z" fill="#444746"/></svg>
<div class="a" style="left:239px;top:830px;font-size:12.2px;color:#444746;white-space:nowrap">Abr</div>
<svg style="left:267px;top:835px" width="8" height="4"><path d="M0 0H8L4 4Z" fill="#444746"/></svg>
<div class="a" style="left:296px;top:830px;font-size:12.2px;color:#444746;white-space:nowrap">Mai</div>
<svg style="left:325px;top:835px" width="8" height="4"><path d="M0 0H8L4 4Z" fill="#444746"/></svg>
<div class="a" style="left:354px;top:830px;font-size:12.2px;color:#444746;white-space:nowrap">Jun</div>
<svg style="left:382.5px;top:835px" width="8" height="4"><path d="M0 0H8L4 4Z" fill="#444746"/></svg>
<div class="a" style="left:411px;top:830px;font-size:12.2px;color:#444746;white-space:nowrap">Jul</div>
<svg style="left:436.6px;top:835px" width="8" height="4"><path d="M0 0H8L4 4Z" fill="#444746"/></svg>
<div class="a" style="left:465px;top:830px;font-size:12.2px;color:#444746;white-space:nowrap">Ago</div>
<svg style="left:495.6px;top:835px" width="8" height="4"><path d="M0 0H8L4 4Z" fill="#444746"/></svg>
<div class="a" style="left:524px;top:830px;font-size:12.2px;color:#444746;white-space:nowrap">Set</div>
<svg style="left:551.6px;top:835px" width="8" height="4"><path d="M0 0H8L4 4Z" fill="#444746"/></svg>
<div class="a" style="left:580px;top:830px;font-size:12.2px;color:#444746;white-space:nowrap">Out</div>
<svg style="left:609.7px;top:835px" width="8" height="4"><path d="M0 0H8L4 4Z" fill="#444746"/></svg>
<div class="a" style="left:638px;top:830px;font-size:12.2px;color:#444746;white-space:nowrap">Nov</div>
<svg style="left:668.6px;top:835px" width="8" height="4"><path d="M0 0H8L4 4Z" fill="#444746"/></svg>
<div class="a" style="left:697.8px;top:830px;font-size:12.2px;color:#444746;white-space:nowrap">Dez</div>
<svg style="left:727px;top:835px" width="8" height="4"><path d="M0 0H8L4 4Z" fill="#444746"/></svg>
<div class="a" style="left:755.5px;top:830px;font-size:12.2px;color:#444746;white-space:nowrap">Rel_Equip</div>
<svg style="left:820.6px;top:835px" width="8" height="4"><path d="M0 0H8L4 4Z" fill="#444746"/></svg>
<div class="a" style="left:849.5px;top:830px;font-size:12.2px;color:#444746;white-space:nowrap">Rel_Desp</div>
<svg style="left:911px;top:835px" width="8" height="4"><path d="M0 0H8L4 4Z" fill="#444746"/></svg>
<div class="a" style="left:939.5px;top:830px;font-size:12.2px;color:#444746;white-space:nowrap">Rel_FC</div>
<svg style="left:987.6px;top:835px" width="8" height="4"><path d="M0 0H8L4 4Z" fill="#444746"/></svg>
<div class="a" style="left:1015.5px;top:830px;font-size:12.2px;color:#444746;white-space:nowrap">Rel_Cli</div>
<svg style="left:1063px;top:835px" width="8" height="4"><path d="M0 0H8L4 4Z" fill="#444746"/></svg>
<div class="a" style="left:1090px;top:830px;font-size:12.2px;color:#0b57d0;-webkit-text-stroke:0.4px #0b57d0;white-space:nowrap">An_Equip</div>
<svg style="left:1154px;top:835px" width="8" height="4"><path d="M0 0H8L4 4Z" fill="#0b57d0"/></svg>
<div class="a" style="left:1182px;top:830px;font-size:12.2px;color:#444746;white-space:nowrap">Dash</div>
<svg style="left:1219px;top:835px" width="8" height="4"><path d="M0 0H8L4 4Z" fill="#444746"/></svg>
<div class="a" style="left:1247.5px;top:830px;font-size:12.2px;color:#444746;white-space:nowrap">Ini</div>
<svg style="left:1270px;top:835px" width="8" height="4"><path d="M0 0H8L4 4Z" fill="#444746"/></svg>
<div class="a" style="left:1298.5px;top:830px;font-size:12.2px;color:#444746;white-space:nowrap">Duv</div>
<svg style="left:1328.6px;top:835px" width="8" height="4"><path d="M0 0H8L4 4Z" fill="#444746"/></svg>
<div class="a" style="left:1357px;top:830px;font-size:12.2px;color:#444746;white-space:nowrap">Sug</div>
<svg style="left:1387px;top:835px" width="8" height="4"><path d="M0 0H8L4 4Z" fill="#444746"/></svg>
<svg style="left:1422px;top:831px" width="7" height="12"><path d="M6 1L1 6L6 11" stroke="#444746" stroke-width="1.5" fill="none"/></svg>
<svg style="left:1455px;top:831px" width="7" height="12"><path d="M1 1L6 6L1 11" stroke="#b0b0b0" stroke-width="1.5" fill="none"/></svg>
<svg style="left:1573px;top:831px" width="7" height="12"><path d="M6 1L1 6L6 11" stroke="#444746" stroke-width="1.5" fill="none"/></svg>
</body></html>
